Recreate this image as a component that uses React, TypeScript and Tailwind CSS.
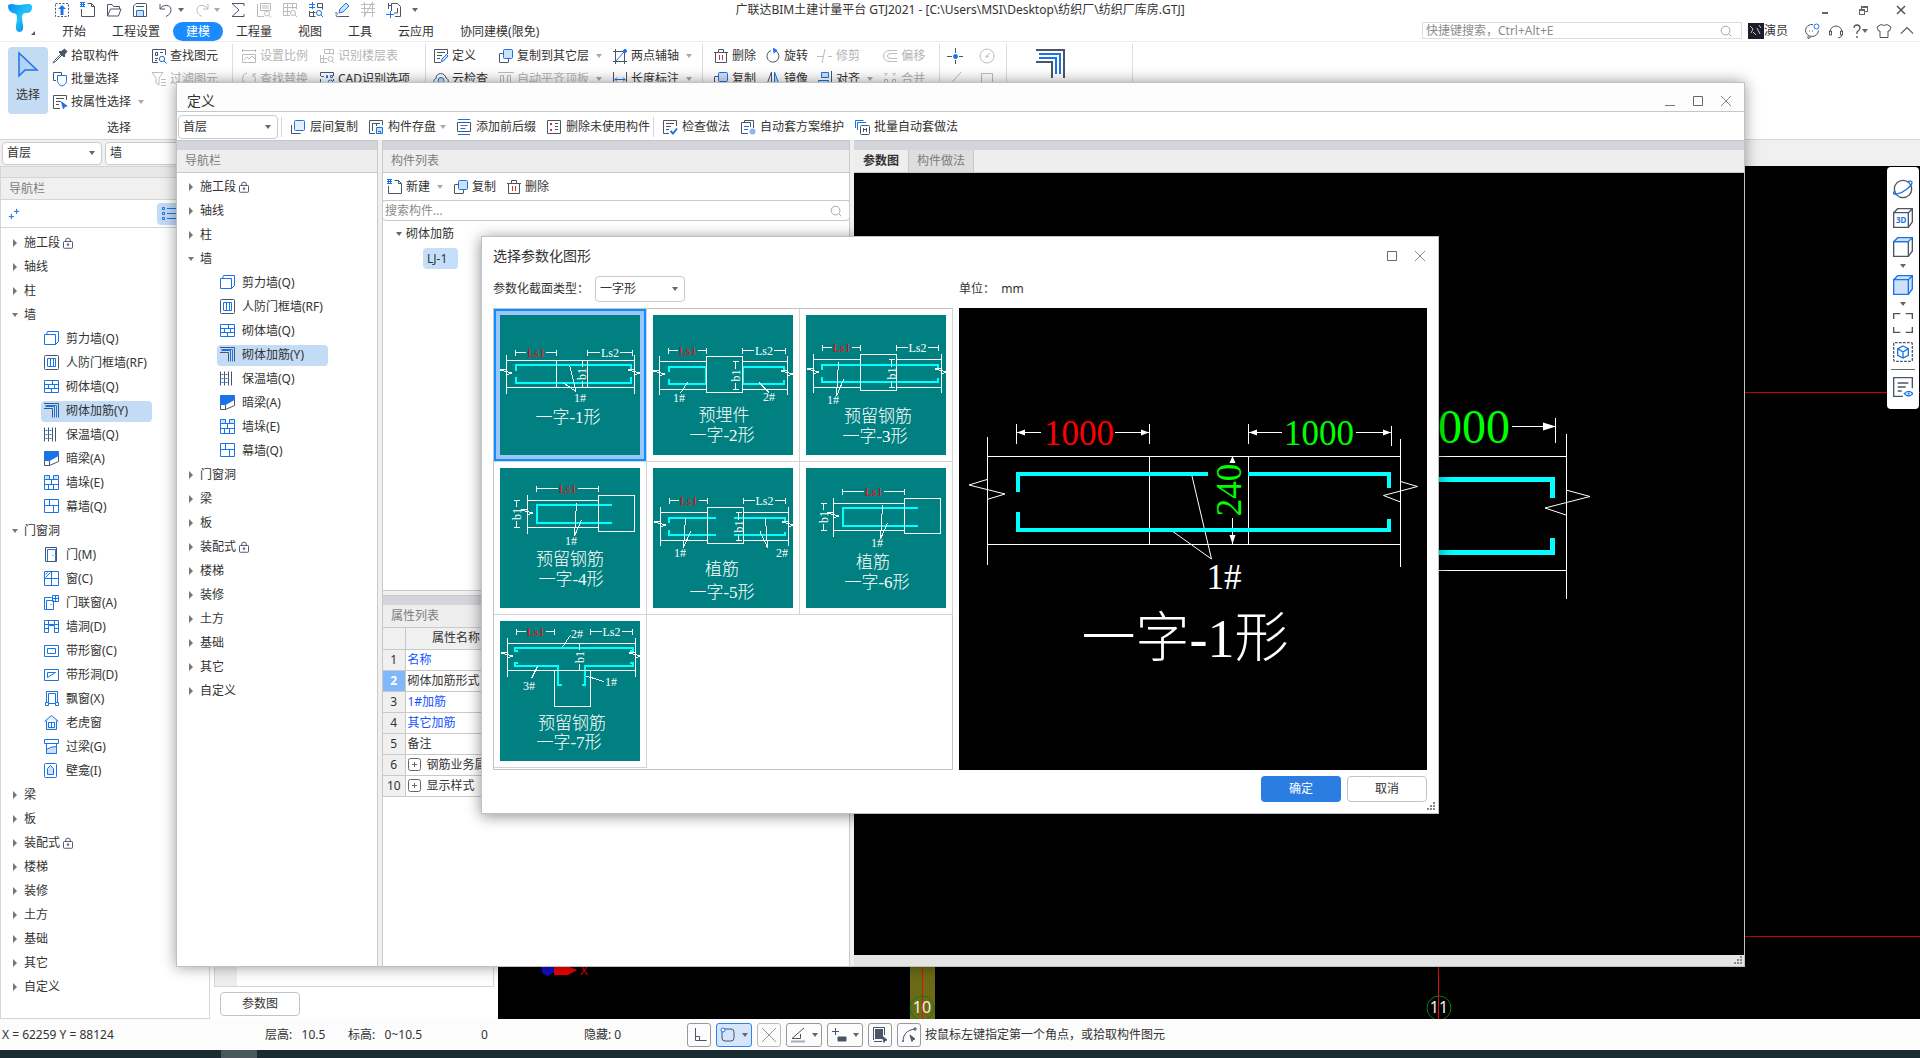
import React, { useState } from "react";

const D = "#4b5568";
const B = "#1a73e8";
const G = "#bcbcbc";
const L = "#cfe1fa";

// 16x16 line icons
const icons: Record<string, React.ReactNode> = {
  upload: (
    <>
      <rect x="1.500" y="1.500" width="13" height="13" stroke={D} strokeDasharray="2 1.5" />
      <path d="M8 3l4 4H9.500v6h-3V7H4z" fill={B} stroke="none" />
    </>
  ),
  file: (
    <>
      <path d="M7.500 1.500h4l3 3v10h-13V7" stroke={D} />
      <path d="M11.500 1.500V4.500h3" stroke={D} />
      <path d="M0 .5h5M0 2.500h5M0 4.500h5M1.500 0v5M3.500 0v5" stroke={B} />
    </>
  ),
  folder: <path d="M1.500 14V2.500h4.500l1.500 2h6V7M1.500 14L4.500 7H15l-2.500 7z" stroke={D} />,
  save: (
    <>
      <path d="M1.500 4l2.500-2.500h9.500q1 0 1 1v12h-13z" stroke={D} />
      <path d="M4 4.500h8" stroke={D} />
      <path d="M4.500 14V8.500h7V14" stroke={B} fill={L} />
    </>
  ),
  undo: <path d="M2 2v5h5M2 7c3-5 11-5 11 1 0 3-2 5-5 6.500" stroke={D} />,
  redo: <path d="M14 2v5H9M14 7C11 2 3 2 3 8c0 3 2 5 5 6.500" stroke={G} />,
  sum: <path d="M14 4V1.500H2L9 8l-7 6.500h12V12" stroke={D} />,
  gridFind: (
    <>
      <path d="M4.500 1.500h10v7h-10zM6 4h7M6 6h7M1.500 2v12.500H8" stroke={G} />
      <circle cx="11" cy="11.500" r="2.500" stroke={G} />
      <path d="M13 13.500l2 2" stroke={G} />
    </>
  ),
  tableFind: (
    <>
      <path d="M14.500 7V1.500h-13v12H8M1.500 5.500h13M1.500 9.500H8M5.500 1.500v12M10.500 1.500V7" stroke={G} />
      <circle cx="11" cy="11" r="2.500" stroke={G} />
      <path d="M13 13l2 2" stroke={G} />
    </>
  ),
  partFind: (
    <>
      <path d="M9.500 1.500h5v6M9.500 1.500V5.500h5M1.500 9v5.500h6M1.500 10.500h6M5.500 9v5.500" stroke={D} />
      <path d="M4.500 0v7M1 2.500h6M1 5.500h6" stroke={B} />
      <circle cx="11" cy="11" r="2.500" stroke={B} />
      <path d="M13 13l2 2" stroke={B} />
    </>
  ),
  pen: (
    <>
      <path d="M5 11l1-4 6-6 3 3-6 6z" stroke={B} fill={L} />
      <path d="M1 11.500c2-2 3 0 1.500 1.500S3 15 6 14.500h9" stroke={D} />
    </>
  ),
  beam: <path d="M1 2.500h14M1 6.500h14M1 10.500h14M4.500 0v15M12.500 0v15M4 15L12 1" stroke={G} />,
  pageAdd: (
    <>
      <path d="M5.500 9V1.500h6l3 3v10H9M2 3.500h3M2.500 1v6" stroke={D} />
      <path d="M4.500 9v7M0 12.500h8" stroke={B} />
      <path d="M11.500 6v5H8" stroke={D} />
    </>
  ),
  pick: (
    <>
      <path d="M9 6L2.500 12.500 1 15l2.500-1.500L10 7" stroke={D} />
      <path d="M7 4l5 5 1-1-1-1 3-3.500L12.500 1 9 4 8 3z" fill={D} stroke={D} />
    </>
  ),
  batch: (
    <>
      <path d="M4 9.500H1.500v-8h8V4" stroke={D} />
      <path d="M5.500 4.500h9v5q0 4-4.500 5.500Q5.500 13.500 5.500 9.500z" stroke={B} />
    </>
  ),
  propPick: (
    <>
      <path d="M14.500 6V1.500h-13v13H8M4 4.500h8M4 7.500h5M4 10.500h3" stroke={D} />
      <path d="M9.500 8l5.500 4-2.500.5L11.500 15z" fill={B} stroke={B} />
    </>
  ),
  findElem: (
    <>
      <path d="M14.500 7V1.500h-13v13H7M4.500 4.500h2v3h-2zM9 4.500h3M4 10.500h3M4 12.500h2" stroke={D} />
      <circle cx="11" cy="11" r="2.700" stroke={B} />
      <path d="M13 13l2.500 2.500" stroke={B} />
    </>
  ),
  filter: <path d="M1 1.500h11L8 7v7l-3-2V7zM10 8.500h5M10 11.500h5M10 14.500h5" stroke={G} />,
  scale: <path d="M1.500 1v3M14.500 1v3M1 2.500h14M1.500 6.500v8h13v-8zM3 12l3-3 2 2 3-3 3 3" stroke={G} />,
  recog: (
    <>
      <path d="M5.500 1.500h9V7M5.500 1.500V5.500h9M10.500 1.500v4M1.500 7v7.500H8M1.500 10.500H8M4.500 7v7.500" stroke={G} />
      <circle cx="11.500" cy="11" r="2.500" stroke={G} />
      <path d="M13 13l2 2" stroke={G} />
    </>
  ),
  replace: <path d="M6 2C1 3 0 10 4 13M4 13H1M4 13v-3M10 14c5-1 6-8 2-11M12 3h3M12 3v3" stroke={G} />,
  cad: (
    <>
      <path d="M1.500 8v6.500h7M1.500 5V1.500h13V5M14.500 8v2" stroke={D} />
      <path d="M2 5.500h3M7.500 7V4.500h1v2.500M11.500 4.500v2h2v-2z" stroke={B} />
      <circle cx="11.500" cy="11.500" r="2.500" stroke={B} />
    </>
  ),
  define: (
    <>
      <path d="M14.500 6V1.500h-13v13H8M4 4.500h8M4 7.500h5M4 10.500h3" stroke={D} />
      <path d="M8.500 13.500l.5-2.500 4.500-4.500 1.500 1.500-4.500 5z" stroke={B} fill={L} />
    </>
  ),
  copy: (
    <>
      <path d="M5 5.500H2q-.5 0-.5.5v8q0 .5.5.5h8q.5 0 .5-.5v-3" stroke={D} />
      <rect x="5.500" y="1.500" width="9" height="9" rx="1" stroke={B} fill={L} />
    </>
  ),
  cloudCheck: (
    <>
      <path d="M4 13.500C0 13 0 8 3 7.500 3 1 12 1 13 7c3 1 3 5 0 6.500" stroke={D} />
      <circle cx="8" cy="9.500" r="3" stroke={B} fill={L} />
    </>
  ),
  flatTop: <path d="M0 1.500h16M2.500 4.500h3v10h-3zM9.500 4.500h3v7h-3zM14.500 12v3" stroke={G} />,
  twoPoint: (
    <>
      <path d="M1 3.500h14M1 13.500h14M3.500 1v15M12.500 1v15" stroke={D} />
      <path d="M4 13l8-9" stroke={B} />
      <circle cx="13" cy="3" r="1.500" fill={B} stroke={B} />
    </>
  ),
  length: (
    <>
      <path d="M1.500 1v14M14.500 1v14" stroke={D} />
      <path d="M3 8.500h10M5 6.500l-2 2 2 2M11 6.500l2 2-2 2" stroke={B} />
    </>
  ),
  trash: (
    <>
      <path d="M1 4.500h14M2.500 4v10.500h11V4M5.500 4V1.500h5V4" stroke={D} />
      <path d="M6.500 7v5M9.500 7v5" stroke="#d93025" />
    </>
  ),
  rotate: (
    <>
      <path d="M6 2.500a6 6 0 1 0 5 .5" stroke={D} />
      <path d="M8 0l4 2.500L8.500 5" fill={B} stroke={B} />
    </>
  ),
  trim: <path d="M0 8.500h6M11 8.500h4M8 1L5 15" stroke={G} />,
  offset: <path d="M15 2.500H7a5.500 5.500 0 0 0 0 11h8M15 5.500H8a2.500 2.500 0 0 0 0 5h7" stroke={G} />,
  mirror: (
    <>
      <path d="M6.500 1L1.500 14.500h5z" stroke={D} />
      <path d="M9.500 1l5 13.500h-5z" fill={L} stroke={B} />
    </>
  ),
  align: (
    <>
      <path d="M14.500 0v16" stroke={D} />
      <path d="M4.500 1.500h7v5h-7zM1.500 9.500h10v4h-10z" stroke={B} fill={L} />
    </>
  ),
  merge: <path d="M2.500 8.500h3v6h-3zM10.500 8.500h3v6h-3zM3 5l3-3M13 5l-3-3M2 2.500h2M12 2.500h2" stroke={G} />,
  point: (
    <>
      <path d="M8.500 0v5M8.500 12v4M0 8.500h5M12 8.500h4" stroke={D} />
      <circle cx="8.500" cy="8.500" r="2" fill={B} stroke={B} />
    </>
  ),
  circle: (
    <>
      <circle cx="8" cy="8" r="7" stroke={G} />
      <path d="M8 8l3-3M7 8h2v1H7z" stroke={G} />
    </>
  ),
  line: <path d="M2 15L14 1" stroke={G} />,
  rect: <path d="M2.500 2.500h11v11h-11z" stroke={G} />,
  layers: (
    <>
      <path d="M1.500 6v8.500h9" stroke={D} />
      <rect x="4.500" y="1.500" width="10" height="10" rx="1" stroke={B} fill="#e6f0fd" />
    </>
  ),
  store: (
    <>
      <path d="M14.500 6V1.500h-13v13H7M4 4.500h8M4.500 4.500V12M8.500 4.500V7" stroke={D} />
      <path d="M8.500 8.500h6v6h-6zM10 12.500h2.500v2" stroke={B} fill={L} />
    </>
  ),
  affix: (
    <>
      <path d="M1.500 3.500h13v9h-13z" stroke={D} />
      <path d="M2 .5h12M2 15.500h12M4.500 6.500h7M4.500 9.500h5" stroke={B} />
    </>
  ),
  unused: (
    <>
      <path d="M1.500 1.500h13v13h-13z" stroke={D} />
      <path d="M4 4l2 2M6 4L4 6M4 10l2 2M6 10l-2 2" stroke="#d93025" />
      <path d="M9 4.500h3M9 10.500h3M9 7.500h3" stroke={D} />
    </>
  ),
  check: (
    <>
      <path d="M14.500 7V1.500h-13v13H7M4 4.500h8M4 7.500h5M4 10.500h3" stroke={D} />
      <path d="M8.500 12l2.500 2.500 4-5" stroke={B} strokeWidth="2" />
    </>
  ),
  scheme: (
    <>
      <path d="M4.500 3V1.500h9V9M1.500 3.500h9V8M1.500 3.500v11H8" stroke={D} />
      <path d="M4 7.500h5M4 10.500h4" stroke={B} />
      <circle cx="12.500" cy="12.500" r="3" fill="#8bb8f3" stroke="none" />
    </>
  ),
  batchAuto: (
    <>
      <path d="M1.500 9V1.500h8M3.500 11V3.500H12" stroke={B} />
      <rect x="6.500" y="6.500" width="9" height="9" rx="1" stroke={D} />
      <path d="M9.500 9v4M12.500 9v4M9.500 10.500h3" stroke={D} />
    </>
  ),
  search: (
    <>
      <circle cx="7.500" cy="7.500" r="5" stroke="#999" />
      <path d="M11 11l3 3" stroke="#999" />
    </>
  ),
  shear: <path d="M1 4h11v10H1zM3 4l1-3h11v10l-3 3" stroke={B} />,
  civil: (
    <>
      <rect x="1" y="1" width="14" height="14" rx="1" stroke={D} />
      <path d="M4 4h8v8H4zM7 4v8M10 4v8" stroke={B} />
    </>
  ),
  brick: <path d="M1 2h14v12H1zM1 6h14M1 10h14M9 2v4M5 6v4M11 6v4M8 10v4" stroke={B} />,
  rebar: (
    <>
      <path d="M0 1h15v14M0 6h9v9" stroke={D} />
      <path d="M2 3h11v12M2 4h9v11" stroke={B} />
    </>
  ),
  insul: (
    <>
      <path d="M1 1v14M5 1v14M9 1v14M12 1v14" stroke={D} />
      <path d="M2 4h2M2 8h2M2 12h2M6 4h2M6 8h2M6 12h2" stroke={B} />
    </>
  ),
  hidden: (
    <>
      <path d="M1 1h14v4l-9 5H1z" fill={B} stroke={B} />
      <path d="M1 10v5h5l9-4V5M6 10v5" stroke={D} />
    </>
  ),
  pier: (
    <>
      <path d="M2 1h4v4H2zM10 1h4v4h-4z" fill={L} stroke="none" />
      <path d="M6 5H1V1h5v4M10 5h5V1h-5v4M1 5v10h14V5M1 5h14M1 10h14M8 5v5M5 10v5M10 10v5" stroke={B} />
    </>
  ),
  curtain: <path d="M1 1h14v13H1zM1 7h14M6 1v6M10 7v7" stroke={B} />,
  door: (
    <>
      <path d="M2 1h11v14H2z" stroke={D} />
      <path d="M4 15V3h8v12M9 9h1" stroke={B} />
    </>
  ),
  window: <path d="M1 1h14v14H1zM1 8h14M8 1v14M2 7l5-5M2 4l2-2" stroke={B} />,
  doorWin: <path d="M8 3H1v12h2M3 15V6h7v9zM9 1h6v6H9zM12 1v6M9 4h6M7 10h1" stroke={B} />,
  wallHole: <path d="M1 14V2h14v12h-4V7H5v7zM1 6h14M5 2v4M11 2v4M1 10h4M11 10h4" stroke={B} />,
  ribbonWin: <path d="M1 3h14v11H1zM4 6h8v5H4z" stroke={B} />,
  ribbonHole: <path d="M1 3h14v11H1zM4 6h8l-8 5z" stroke={B} />,
  bay: <path d="M3 12V1h11v11M5 12V3h7v9M2 12h3v3H2zM12 12h3v3h-3zM5 13h7" stroke={B} />,
  dormer: <path d="M1 7l7-6 7 6M3 6v9h10V6M5 8h6v5H5zM8 8v5" stroke={B} fill="#e6f0fd" />,
  lintel: (
    <>
      <path d="M1 1h14v4H1zM3 5v10h10V5" stroke={B} />
      <path d="M3 15v-4q4-3 10-3v7z" fill={L} stroke={B} />
    </>
  ),
  niche: (
    <>
      <rect x="1" y="1" width="12" height="14" rx="1" stroke={B} />
      <path d="M4 12V6l3-3 3 3v6z" stroke={B} fill={L} />
    </>
  ),
  lock: (
    <>
      <rect x="2" y="6" width="12" height="9" rx="1" stroke={D} strokeWidth="1.300" />
      <path d="M5 6V4q0-2.500 3-2.500T11 4v2M8 9v3" stroke={D} strokeWidth="1.300" />
      <circle cx="8" cy="10" r="1.200" stroke={D} />
    </>
  ),
  orbit: (
    <>
      <circle cx="8" cy="8" r="6.500" stroke={D} />
      <path d="M2 9c-4 5 4 3 9-1s5-7 0-5.500" stroke={B} />
    </>
  ),
  cube: <path d="M1 4h11v11H1zM1 4l3-3h11v10l-3 4M12 4l3-3" stroke={D} />,
  cubeTop: (
    <>
      <path d="M1 4h11v11H1zM15 1v10l-3 4" stroke={D} />
      <path d="M1 4l3-3h11l-3 3z" stroke={B} fill={L} />
    </>
  ),
  cubeBlue: <path d="M1 4h11v11H1zM1 4l3-3h11v10l-3 4M12 4l3-3" stroke={B} fill={L} />,
  fit: <path d="M1 5V1h5M10 1h5v4M15 11v4h-5M6 15H1v-4" stroke={D} />,
  isolate: (
    <>
      <rect x="1" y="1" width="14" height="14" rx="1" stroke={D} strokeDasharray="2 1" />
      <path d="M8 3.500l4 2v5l-4 2-4-2v-5zM4 5.500l4 2.500 4-2.500M8 8v4" stroke={B} />
    </>
  ),
  listView: (
    <>
      <path d="M15 9V1H1v14h7M4 5h8M4 8h6M4 11h3" stroke={D} />
      <path d="M9 13q3-3.500 6.500 0-3.500 3.500-6.500 0z" stroke={B} />
      <circle cx="12.200" cy="13" r="0.800" fill={B} />
    </>
  ),
  plus2: <path d="M11.500 1v7M8 4.500h7M4.500 8v7M1 11.500h7" stroke={B} strokeWidth="1.300" />,
  bullets: <path d="M1.500 1.500h2v2h-2zM1.500 6.500h2v2h-2zM1.500 11.500h2v2h-2zM6 2.500h10M6 7.500h10M6 12.500h10" stroke={B} />,
  chat: (
    <>
      <path d="M9 1.500a6.500 6 0 1 0 5.500 6M4 13v2.500l3-1.500M5 8h1M8 8h1" stroke={D} />
      <circle cx="12.500" cy="3.500" r="2.500" stroke={B} />
    </>
  ),
  headset: <path d="M2 9a6 6 0 1 1 12 0M1.500 8v4h2V8zM12.500 8v4h2V8zM14 12q-1 3-4 3" stroke={D} />,
  help: <path d="M5 5q0-3 3-3t3 3q0 2-3 4v2M8 13v2" stroke={D} strokeWidth="1.300" />,
  shirt: <path d="M5 1.500L1 4l1.500 4H4v6.500h8V8h1.500L15 4l-4-2.500q-3 2-6 0z" stroke={D} />,
  up: <path d="M1 11l7-7 7 7" stroke={D} strokeWidth="1.300" />,
};

type IconProps = { name: string; className?: string; viewBox?: string };

const Icon: React.FC<IconProps> = ({ name, className = "size-4", viewBox = "0 0 16 16" }) => (
  <svg viewBox={viewBox} fill="none" strokeWidth="1" className={`${className} shrink-0`} aria-hidden="true">
    {icons[name]}
  </svg>
);

const Caret: React.FC<{ grey?: boolean }> = ({ grey }) => (
  <svg viewBox="0 0 6 4" className="h-1 w-1.5 shrink-0" aria-hidden="true">
    <path d="M0 0h6L3 4z" fill={grey ? "#aaa" : "#666"} />
  </svg>
);

type SelectProps = { label: string; options: string[]; className: string };

const Select: React.FC<SelectProps> = ({ label, options, className }) => (
  <div className={`relative flex items-center rounded border border-[#c9cbcf] bg-white ${className}`}>
    <select aria-label={label} className="h-full w-full appearance-none bg-transparent pl-1 outline-none">
      {options.map((o) => (
        <option key={o}>{o}</option>
      ))}
    </select>
    <span className="pointer-events-none absolute right-1.5">
      <Caret />
    </span>
  </div>
);

type TreeItem = { name: string; icon: string };
type TreeGroup = { name: string; locked?: boolean; items?: TreeItem[] };

const groups: TreeGroup[] = [
  { name: "施工段", locked: true },
  { name: "轴线" },
  { name: "柱" },
  {
    name: "墙",
    items: [
      { name: "剪力墙(Q)", icon: "shear" },
      { name: "人防门框墙(RF)", icon: "civil" },
      { name: "砌体墙(Q)", icon: "brick" },
      { name: "砌体加筋(Y)", icon: "rebar" },
      { name: "保温墙(Q)", icon: "insul" },
      { name: "暗梁(A)", icon: "hidden" },
      { name: "墙垛(E)", icon: "pier" },
      { name: "幕墙(Q)", icon: "curtain" },
    ],
  },
  {
    name: "门窗洞",
    items: [
      { name: "门(M)", icon: "door" },
      { name: "窗(C)", icon: "window" },
      { name: "门联窗(A)", icon: "doorWin" },
      { name: "墙洞(D)", icon: "wallHole" },
      { name: "带形窗(C)", icon: "ribbonWin" },
      { name: "带形洞(D)", icon: "ribbonHole" },
      { name: "飘窗(X)", icon: "bay" },
      { name: "老虎窗", icon: "dormer" },
      { name: "过梁(G)", icon: "lintel" },
      { name: "壁龛(I)", icon: "niche" },
    ],
  },
  { name: "梁" },
  { name: "板" },
  { name: "装配式", locked: true },
  { name: "楼梯" },
  { name: "装修" },
  { name: "土方" },
  { name: "基础" },
  { name: "其它" },
  { name: "自定义" },
];

const NavTree: React.FC<{ initial: string[] }> = ({ initial }) => {
  const [open, setOpen] = useState(initial);
  const [selected, setSelected] = useState("砌体加筋(Y)");

  const toggle = (name: string) => {
    setOpen(open.includes(name) ? open.filter((n) => n !== name) : [...open, name]);
  };

  return (
    <ul>
      {groups.map((g) => {
        const expanded = open.includes(g.name);
        return (
          <li key={g.name}>
            <button className="flex h-6 items-center pl-[11px]" onClick={() => toggle(g.name)}>
              <svg viewBox="0 0 6 8" className="mr-1.5 h-2 w-1.5">
                <path d={expanded ? "M0 2h6L3 6z" : "M1 0l4 4-4 4z"} fill="#777" />
              </svg>
              {g.name}
              {g.locked && <Icon name="lock" className="ml-0.5 size-3" />}
            </button>
            {expanded &&
              g.items?.map((it) => (
                <div key={it.name} className="flex h-6 items-center pl-10">
                  <button
                    onClick={() => setSelected(it.name)}
                    className={`flex h-[21px] w-[111px] items-center gap-1.5 rounded-sm pl-[3px] whitespace-nowrap ${
                      selected === it.name ? "bg-[#c3dbf5]" : ""
                    }`}
                  >
                    <Icon name={it.icon} viewBox="0.5 0.5 16 16" />
                    {it.name}
                  </button>
                </div>
              ))}
          </li>
        );
      })}
    </ul>
  );
};

const quick = ["sum", "gridFind", "tableFind", "partFind", "pen", "beam", "pageAdd"];
const menu = ["开始", "工程设置", "建模", "工程量", "视图", "工具", "云应用", "协同建模(限免)"];

const TopBar: React.FC = () => (
  <header className="relative shrink-0 border-b border-[#ececec] bg-white">
    <div className="flex h-5 items-center">
      <div className="flex flex-1 items-center gap-2.5 pl-[54px]">
        {["upload", "file", "folder", "save"].map((n) => (
          <button key={n} aria-label={n}>
            <Icon name={n} />
          </button>
        ))}
        <button aria-label="撤销" className="flex items-center gap-1">
          <Icon name="undo" />
          <Caret />
        </button>
        <button aria-label="恢复" className="flex items-center gap-1">
          <Icon name="redo" />
          <Caret grey />
        </button>
        {quick.map((n) => (
          <button key={n} aria-label={n}>
            <Icon name={n} />
          </button>
        ))}
        <Caret />
      </div>
      <h1>广联达BIM土建计量平台 GTJ2021 - [C:\Users\MSI\Desktop\纺织厂\纺织厂库房.GTJ]</h1>
      <div className="flex flex-1 items-center justify-end gap-7 pr-3.5 pl-10">
        <button aria-label="最小化">
          <svg viewBox="0 0 10 10" className="size-2.5">
            <path d="M2 8h6" stroke="#666" strokeWidth="2" />
          </svg>
        </button>
        <button aria-label="还原">
          <svg viewBox="0 0 10 10" className="size-2.5" fill="none" stroke="#666" shapeRendering="crispEdges">
            <path d="M1 4h5v5H1zM1 5h5M3 4V1h6v5H6M3 2h6" />
          </svg>
        </button>
        <button aria-label="关闭">
          <svg viewBox="0 0 10 10" className="size-2.5">
            <path d="M1 1l8 8M9 1L1 9" stroke="#555" strokeWidth="1.5" />
          </svg>
        </button>
      </div>
    </div>
    <div className="flex h-[21px] items-end pr-1.5">
      <nav className="flex flex-1 items-center pl-[49px]">
        {menu.map((m) => (
          <button
            key={m}
            className={`h-[19px] px-[13px] ${m === "建模" ? "rounded-full bg-[#1a8cff] text-white" : ""}`}
          >
            {m}
          </button>
        ))}
      </nav>
      <label className="mr-1.5 mb-0.5 flex h-[17px] w-[320px] items-center border border-[#ddd] pr-2 pl-[3px]">
        <input aria-label="快捷键搜索" placeholder="快捷键搜索，Ctrl+Alt+E" className="flex-1 outline-none placeholder:text-[#8c8c8c]" />
        <Icon name="search" className="size-3.5" />
      </label>
      <span className="mb-0.5 flex items-center pr-4">
        <svg viewBox="0 0 16 16" className="size-4">
          <path d="M0 0h16v16H0z" fill="#1c1c2e" />
          <path d="M2 3l3 3-2 4M9 5l3 6M11 2l2 3M5 9l3 3" stroke="#d8c3ad" fill="none" />
        </svg>
        演员
      </span>
      <div className="mb-0.5 flex items-center gap-2">
        <Icon name="chat" />
        <Icon name="headset" />
        <span className="flex items-center">
          <Icon name="help" className="-mx-[3px] size-4" />
          <Caret />
        </span>
        <Icon name="shirt" />
        <Icon name="up" className="size-3.5" />
      </div>
    </div>
    {/* app logo spans both rows */}
    <svg viewBox="0 0 36 34" className="absolute top-1 left-2 h-[34px] w-9">
      <defs>
        <linearGradient id="logo" x1="0" y1="0" x2="1" y2="1">
          <stop offset="0" stopColor="#0a8bf0" />
          <stop offset="0.5" stopColor="#1fc3f7" />
          <stop offset="1" stopColor="#0b6fe0" />
        </linearGradient>
      </defs>
      <path
        d="M0 2q0-2 4-2 4 1 8 1 5-1 9-1 3 0 3 3 0 6-6 6-4 0-4 4 0 4 1 8 1 7-3.500 7T8 21q1-4 1-8 0-3-2-3.500-7-1-7-7.500z"
        fill="url(#logo)"
      />
      <path d="M27 27v4h-4z" fill="#555" />
    </svg>
  </header>
);

type Cmd = { icon: string; text?: string; off?: boolean; drop?: boolean };

const Command: React.FC<Cmd> = ({ icon, text, off, drop }) => (
  <button
    aria-label={text || icon}
    className={`flex h-[23px] items-center gap-[3px] whitespace-nowrap ${off ? "text-[#b5b5b5]" : ""}`}
  >
    <Icon name={icon} />
    {text}
    {drop && (
      <span className="ml-1">
        <Caret grey />
      </span>
    )}
  </button>
);

type RibbonGroup = { className: string; cols: Cmd[][] };

const ribbon: RibbonGroup[] = [
  {
    className: "gap-[11px] pl-2 pr-[15px]",
    cols: [
      [
        { icon: "scale", text: "设置比例", off: true },
        { icon: "replace", text: "查找替换", off: true },
      ],
      [
        { icon: "recog", text: "识别楼层表", off: true },
        { icon: "cad", text: "CAD识别选项" },
      ],
    ],
  },
  {
    className: "gap-2.5 pl-[7px] pr-2.5",
    cols: [
      [
        { icon: "define", text: "定义" },
        { icon: "cloudCheck", text: "云检查" },
      ],
      [
        { icon: "copy", text: "复制到其它层", drop: true },
        { icon: "flatTop", text: "自动平齐顶板", off: true, drop: true },
      ],
      [
        { icon: "twoPoint", text: "两点辅轴", drop: true },
        { icon: "length", text: "长度标注", drop: true },
      ],
    ],
  },
  {
    className: "gap-[9px] pl-2.5 pr-3.5",
    cols: [
      [
        { icon: "trash", text: "删除" },
        { icon: "copy", text: "复制" },
      ],
      [
        { icon: "rotate", text: "旋转" },
        { icon: "mirror", text: "镜像" },
      ],
      [
        { icon: "trim", text: "修剪", off: true },
        { icon: "align", text: "对齐", drop: true },
      ],
      [
        { icon: "offset", text: "偏移", off: true },
        { icon: "merge", text: "合并", off: true },
      ],
    ],
  },
  {
    className: "gap-4 pl-[7px] pr-[11px]",
    cols: [
      [{ icon: "point" }, { icon: "line" }],
      [{ icon: "circle" }, { icon: "rect" }],
    ],
  },
];

const Ribbon: React.FC = () => (
  <section className="flex h-[97px] shrink-0 items-start bg-white pt-0.5">
    <div className="w-[232px]">
      <div className="flex pl-2">
        <button className="mt-[3px] flex h-[67px] w-10 flex-col items-center gap-2 rounded-sm bg-[#c3dbf3] pt-1">
          <svg viewBox="0 0 24 28" className="h-7 w-6">
            <path d="M3 2v23l6-6h12z" fill="#b4d1f7" stroke={B} strokeWidth="1.5" />
          </svg>
          选择
        </button>
        <div className="ml-1">
          <Command icon="pick" text="拾取构件" />
          <Command icon="batch" text="批量选择" />
          <Command icon="propPick" text="按属性选择" drop />
        </div>
        <div className="ml-[7px]">
          <Command icon="findElem" text="查找图元" />
          <Command icon="filter" text="过滤图元" off />
        </div>
      </div>
      <p className="pt-1.5 pl-1.5 text-center">选择</p>
    </div>
    {ribbon.map((g, i) => (
      <div key={i} className={`flex h-[90px] border-l border-[#ddd] ${g.className}`}>
        {g.cols.map((col, j) => (
          <div key={j}>
            {col.map((c) => (
              <Command key={c.icon} {...c} />
            ))}
          </div>
        ))}
      </div>
    ))}
    <div className="h-[90px] w-[127px] border-x border-[#ddd] pt-1 pl-7">
      <svg viewBox="0 0 32 32" className="size-8" fill="none">
        <path d="M1 2h28v28M1 14h16v16" stroke={D} strokeWidth="2" />
        <path d="M4 6h21v20M4 10h17v16" stroke={B} strokeWidth="2" />
      </svg>
    </div>
  </section>
);

const PanelTitle: React.FC<{ children: React.ReactNode }> = ({ children }) => (
  <>
    <div className="h-2.5 shrink-0 border-t border-[#c3c6cb] bg-[#d3d5da]" />
    <div className="flex h-[23px] shrink-0 items-end border-b border-[#c9c9c9] bg-[#eee] text-[#7d7d7d]">{children}</div>
  </>
);

// main drawing area behind the windows
const Workspace: React.FC = () => (
  <main className="relative min-w-0 flex-1 bg-black">
    <svg className="block h-full w-full">
      <path d="M1240 226.500H1422M1240 770.500H1422" stroke="#d00000" />
      <rect x="412" y="780" width="25" height="80" fill="#6b6b16" />
      <path d="M424.500 780v80M940.500 780v80" stroke="#e01010" />
      <g fill="none" stroke="#0f7a12">
        <circle cx="424" cy="842" r="12" />
        <circle cx="941" cy="842" r="12" />
      </g>
      <g fill="#f2f2e6" fontSize="16" textAnchor="middle" className="font-['Noto_Sans']">
        <text x="424" y="847">10</text>
        <text x="941" y="847">11</text>
      </g>
      <path d="M43 801h13v5l-6 4-5-2z" fill="#1010c8" />
      <path d="M56 800h14l9 4-9 5H56z" fill="#f00000" />
      <text x="82" y="809" fontSize="12" fill="#e00000" className="font-['Liberation_Sans']">
        X
      </text>
    </svg>
    <aside className="absolute top-px right-px flex w-8 flex-col items-center gap-[9px] rounded-sm bg-white pt-3 pb-3">
      <Icon name="orbit" className="size-5" viewBox="0.5 0.5 15 15" />
      <span className="relative">
        <Icon name="cube" className="size-5" viewBox="0.5 0.5 15 15" />
        <b className="absolute bottom-1 left-[3px] text-[8px] leading-none text-[#1a73e8]">3D</b>
      </span>
      <Icon name="cubeTop" className="size-5" viewBox="0.5 0.5 15 15" />
      <span className="-my-0.5 flex">
        <Caret />
      </span>
      <Icon name="cubeBlue" className="size-5" viewBox="0.5 0.5 15 15" />
      <span className="-my-0.5 flex">
        <Caret />
      </span>
      <Icon name="fit" className="size-5" viewBox="0.5 0.5 15 15" />
      <Icon name="isolate" className="size-5" viewBox="0.5 0.5 15 15" />
      <span className="-my-0.5 h-px w-6 bg-[#666]" />
      <Icon name="listView" className="size-5" viewBox="0.5 0.5 15 15" />
    </aside>
  </main>
);

const StatusBar: React.FC = () => (
  <footer className="flex h-[31px] shrink-0 items-center bg-[#fcfcfc] pl-0.5 whitespace-nowrap">
    <span className="w-[263px]">X = 62259 Y = 88124</span>
    <span className="w-[83px]">层高:&nbsp;&nbsp; 10.5</span>
    <span className="w-[133px]">标高:&nbsp;&nbsp; 0~10.5</span>
    <span className="w-[103px]">0</span>
    <span className="w-[103px]">隐藏: 0</span>
    <div className="flex gap-[5px]">
      <button aria-label="正交" className="flex h-6 w-6 items-center justify-center rounded-[3px] border border-[#999]">
        <svg viewBox="0 0 16 16" className="size-4" fill="none" stroke={D}>
          <path d="M4.500 1v12.500h11M4 9.500h4.500v4" />
        </svg>
      </button>
      <button aria-label="捕捉" className="flex h-6 w-9 items-center justify-center gap-1.5 rounded-[3px] border border-[#2f80ed] bg-[#d5e5fb]">
        <svg viewBox="0 0 16 16" className="size-4" fill="none" stroke={D}>
          <rect x="2" y="2" width="12" height="12" rx="3" />
          <circle cx="3" cy="3" r="2" stroke={B} fill="#fff" />
        </svg>
        <Caret />
      </button>
      <button aria-label="交点" className="flex h-6 w-6 items-center justify-center rounded-[3px] border border-[#bbb]">
        <svg viewBox="0 0 16 16" className="size-4" stroke="#999">
          <path d="M1 1l14 14M15 1L1 15" />
        </svg>
      </button>
      <button aria-label="角度" className="flex h-6 w-9 items-center justify-center gap-1.5 rounded-[3px] border border-[#999]">
        <svg viewBox="0 0 16 16" className="size-4" fill="none" stroke={D}>
          <path d="M14 1L2 11.500h8.500V7" />
          <path d="M1 14.500h14" stroke="#a8adb8" strokeWidth="2" />
        </svg>
        <Caret />
      </button>
      <button aria-label="输入" className="flex h-6 w-9 items-center justify-center gap-1.5 rounded-[3px] border border-[#999]">
        <svg viewBox="0 0 16 16" className="size-4" fill={D} stroke={D}>
          <path d="M4.500 1v7M1 4.500h7M7 10h8v4H7z" />
        </svg>
        <Caret />
      </button>
      <button aria-label="图层" className="flex h-6 w-6 items-center justify-center rounded-[3px] border border-[#999]">
        <svg viewBox="0 0 16 16" className="size-4" fill="none" stroke={D}>
          <rect x="3.500" y="2.500" width="7" height="9" fill={D} />
          <path d="M1.500 13V.5h11V8M2 14.500h8" />
          <path d="M10 9l5 4-2 .5-1 2z" fill={D} />
        </svg>
      </button>
      <button aria-label="弧线" className="flex h-6 w-6 items-center justify-center rounded-[3px] border border-[#999]">
        <svg viewBox="0 0 16 16" className="size-4" fill="none" stroke={D}>
          <path d="M2 15C2 7 6 3 14 2M1 14h2M13 1h2v2h-2z" />
          <path d="M9 8l5 4-2 .5-1 2z" fill={D} />
        </svg>
      </button>
    </div>
    <span className="ml-1">按鼠标左键指定第一个角点，或拾取构件图元</span>
  </footer>
);

const WinButtons: React.FC<{ min?: boolean }> = ({ min }) => (
  <div className="flex items-center gap-4">
    {min && (
      <button aria-label="最小化">
        <svg viewBox="0 0 12 12" className="size-3">
          <path d="M1 10.500h10" stroke="#777" />
        </svg>
      </button>
    )}
    <button aria-label="最大化">
      <svg viewBox="0 0 12 12" className="size-3">
        <path d="M1.500 1.500h9v9h-9z" fill="none" stroke="#666" />
      </svg>
    </button>
    <button aria-label="关闭">
      <svg viewBox="0 0 12 12" className="size-3">
        <path d="M1 1l10 10M11 1L1 11" stroke="#888" />
      </svg>
    </button>
  </div>
);

const Grip: React.FC = () => (
  <svg viewBox="0 0 8 8" className="size-2">
    <path d="M6 0h2v2H6zM3 3h2v2H3zM6 3h2v2H6zM0 6h2v2H0zM3 6h2v2H3zM6 6h2v2H6z" fill="#888" />
  </svg>
);

const defTools: (Cmd & { sep?: boolean })[] = [
  { icon: "layers", text: "层间复制", sep: true },
  { icon: "store", text: "构件存盘", drop: true },
  { icon: "affix", text: "添加前后缀" },
  { icon: "unused", text: "删除未使用构件" },
  { icon: "check", text: "检查做法", sep: true },
  { icon: "scheme", text: "自动套方案维护" },
  { icon: "batchAuto", text: "批量自动套做法" },
];

type Prop = { no: string; name: string; blue?: boolean; group?: boolean };

const props: Prop[] = [
  { no: "1", name: "名称", blue: true },
  { no: "2", name: "砌体加筋形式" },
  { no: "3", name: "1#加筋", blue: true },
  { no: "4", name: "其它加筋", blue: true },
  { no: "5", name: "备注" },
  { no: "6", name: "钢筋业务属性", group: true },
  { no: "10", name: "显示样式", group: true },
];

const DefineWindow: React.FC = () => (
  <div className="absolute top-[82px] right-[175px] bottom-[91px] left-44 flex flex-col border border-[#bfc1c4] bg-[#f0f0f0] shadow-[0_0_14px_rgba(0,0,0,0.4)]">
    <div className="flex h-[29px] shrink-0 items-center justify-between border-b border-[#c3c6cb] bg-[#fdfdfd] pt-2 pr-3 pl-2.5 text-sm">
      定义
      <WinButtons min />
    </div>
    <div className="flex h-7 shrink-0 items-center bg-white pt-px pl-px">
      <Select label="楼层" options={["首层"]} className="h-6 w-[100px]" />
      {defTools.map((t) => (
        <React.Fragment key={t.text}>
          {t.sep && <span className="ml-[3px] h-5 w-px bg-[#d8d8d8]" />}
          <button className={`flex items-center gap-1 whitespace-nowrap ${t.sep ? "ml-2" : "ml-2.5"}`}>
            <Icon name={t.icon} />
            {t.text}
            {t.drop && <Caret grey />}
          </button>
        </React.Fragment>
      ))}
    </div>
    <div className="flex min-h-0 flex-1 gap-1">
      <div className="flex w-[201px] flex-col border-r border-[#c9c9c9] bg-white">
        <PanelTitle>
          <span className="pb-[3px] pl-2">导航栏</span>
        </PanelTitle>
        <div className="pt-0.5">
          <NavTree initial={["墙"]} />
        </div>
      </div>

      <div className="flex w-[468px] flex-col border-x border-[#c9c9c9]">
        <PanelTitle>
          <span className="pb-[3px] pl-2">构件列表</span>
        </PanelTitle>
        <div className="flex h-7 items-center gap-2.5 border-b border-[#c9c9c9] bg-white pt-px pl-1">
          <Command icon="file" text="新建" drop />
          <Command icon="copy" text="复制" />
          <Command icon="trash" text="删除" />
        </div>
        <label className="flex h-5 items-center rounded-sm border-b border-[#c9c9c9] bg-white pr-1.5 pl-0.5">
          <input aria-label="搜索构件" placeholder="搜索构件..." className="flex-1 outline-none placeholder:text-[#8c8c8c]" />
          <Icon name="search" className="size-3.5" />
        </label>
        <div className="h-[370px] border-b border-[#c9c9c9] bg-white pt-px">
          <button className="flex h-6 items-center gap-1 pl-[13px]">
            <Caret />
            砌体加筋
          </button>
          <button className="mt-0.5 ml-10 h-[21px] rounded-sm bg-[#c5defa] px-1 text-left">LJ-1&nbsp;&nbsp;</button>
        </div>
        <div className="h-1" />
        <PanelTitle>
          <span className="pb-[3px] pl-2">属性列表</span>
        </PanelTitle>
        <div className="flex-1 bg-white">
          <table className="w-full table-fixed border-collapse">
            <thead>
              <tr className="h-[21px] bg-[#f0f0f0]">
                <th className="w-[22px] border-r border-b border-[#c9c9c9]" />
                <th className="w-[102px] border-r border-b border-[#c9c9c9] p-0 font-normal">属性名称</th>
                <th className="border-r border-b border-[#c9c9c9] p-0 font-normal">属性值</th>
                <th className="w-[42px] border-b border-[#c9c9c9] p-0 font-normal">附加</th>
              </tr>
            </thead>
            <tbody>
              {props.map((p) => (
                <tr key={p.no} className="h-[21px] border-b border-[#c9c9c9]">
                  <td
                    className={`border-r border-[#c9c9c9] p-0 text-center ${
                      p.no === "2" ? "bg-[#80b8fb] font-bold text-white" : "bg-[#f0f0f0]"
                    }`}
                  >
                    {p.no}
                  </td>
                  <td className={`border-r border-[#c9c9c9] p-0 pl-0.5 whitespace-nowrap ${p.blue ? "text-[#1452ff]" : ""}`}>
                    <span className="flex items-center gap-1.5">
                      {p.group && (
                        <svg viewBox="0 0 13 13" className="size-[13px]" fill="none" stroke="#666">
                          <rect x="0.500" y="0.500" width="12" height="12" rx="2" />
                          <path d="M6.500 4v5M4 6.500h5" />
                        </svg>
                      )}
                      {p.name}
                    </span>
                  </td>
                  <td className="border-r border-[#c9c9c9]" />
                  <td />
                </tr>
              ))}
            </tbody>
          </table>
        </div>
      </div>

      <div className="flex min-w-0 flex-1 flex-col">
        <PanelTitle>
          <button className="h-full border-r border-[#c9c9c9] px-[9px] font-bold text-[#333]">参数图</button>
          <button className="h-full border-r border-[#c9c9c9] bg-[#dedede] px-2">构件做法</button>
        </PanelTitle>
        <svg className="block min-h-0 w-full flex-1 bg-black">
          <g stroke="#fff" fill="none" shapeRendering="crispEdges">
            <path d="M300 283.500H712M300 397.500H712M712.500 261v165M701.500 245v25M658 253.500h43" />
          </g>
          <path d="M712 317l24 6.500-45 11.500 21 7" stroke="#fff" fill="none" />
          <path d="M702 253.500l-13-4v8z" fill="#fff" />
          <path d="M300 306.500H698.500V325M698.500 365v14.500H300" stroke="#0ff" strokeWidth="5" fill="none" />
          <text x="656" y="270" fontSize="48" fill="#0f0" textAnchor="end" className="font-['Liberation_Serif']">
            1000
          </text>
        </svg>
        <div className="flex h-[11px] shrink-0 items-end justify-end bg-[#e4e4e4] p-0.5">
          <Grip />
        </div>
      </div>
    </div>
  </div>
);

type DimProps = { x1: number; x2: number; y: number; label: string; red?: boolean };

const Dim: React.FC<DimProps> = ({ x1, x2, y, label, red }) => {
  const mid = (x1 + x2) / 2;
  return (
    <>
      <path d={`M${x1} ${y - 3}v6M${x2} ${y - 3}v6M${x1} ${y}H${mid - 10}M${mid + 10} ${y}H${x2}`} />
      <text x={mid} y={y + 4} textAnchor="middle" fill={red ? "#f00" : "#fff"} stroke="none">
        {label}
      </text>
    </>
  );
};

const B1: React.FC<{ x: number; y1: number; y2: number }> = ({ x, y1, y2 }) => {
  const mid = (y1 + y2) / 2;
  return (
    <>
      <path d={`M${x - 3} ${y1}h6M${x - 3} ${y2}h6M${x} ${y1}V${mid - 7}M${x} ${mid + 7}V${y2}`} />
      <text transform={`translate(${x + 4} ${mid}) rotate(-90)`} textAnchor="middle" fill="#fff" stroke="none">
        b1
      </text>
    </>
  );
};

const Note: React.FC<{ x: number; y: number; children: React.ReactNode }> = ({ x, y, children }) => (
  <text x={x} y={y} fill="#fff" stroke="none">
    {children}
  </text>
);

const Break: React.FC<{ x: number; y: number }> = ({ x, y }) => (
  <path d={`M${x} ${y - 18}v39M${x - 6} ${y - 3}l6-1M${x - 6} ${y - 3}l11 3-5 2`} />
);

type Shape = { lines: [string, number, number][]; bars: string; draw: React.ReactNode };

const shapes: Shape[] = [
  {
    lines: [["一字-1形", 68, 108]],
    bars: "M16 56V50H131V55M16 62v6H131V62",
    draw: (
      <>
        <Dim x1={15.5} x2={56.5} y={37.5} label="Ls1" red />
        <Dim x1={87.5} x2={132.5} y={37.5} label="Ls2" />
        <Break x={6.5} y={58} />
        <Break x={134.5} y={58} />
        <path d="M6.500 45.500h128M6.500 72.500h128M56.500 45v27M87.500 45v27M69.500 50L76 76.500M63.500 68L76 76.500" />
        <B1 x={82} y1={45.5} y2={72.5} />
        <Note x={74} y={87}>1#</Note>
      </>
    ),
  },
  {
    lines: [
      ["预埋件", 71, 106],
      ["一字-2形", 69, 126],
    ],
    bars: "M16 57V52H53V69H16V64M131 56V52H90V69h41V65",
    draw: (
      <>
        <Dim x1={15.5} x2={53.5} y={35.5} label="Ls1" red />
        <Dim x1={89.5} x2={132.5} y={35.5} label="Ls2" />
        <Break x={6.5} y={59} />
        <Break x={134.5} y={59} />
        <path d="M6.500 46.500h47M6.500 74.500h47M89.500 46.500h45M89.500 74.500h45M53.500 41.500h36v36h-36zM34.500 67.500L27.500 78M106 67.500l10 10" />
        <B1 x={82.5} y1={46.5} y2={74.5} />
        <Note x={20} y={87}>1#</Note>
        <Note x={110} y={86}>2#</Note>
      </>
    ),
  },
  {
    lines: [
      ["预留钢筋", 72, 107],
      ["一字-3形", 69, 127],
    ],
    bars: "M16 55V50H132V54M16 62v5H132V63",
    draw: (
      <>
        <Dim x1={16.5} x2={54.5} y={32.5} label="Ls1" red />
        <Dim x1={90.5} x2={132.5} y={32.5} label="Ls2" />
        <Break x={7.5} y={57} />
        <Break x={135.5} y={57} />
        <path d="M7.500 44.500h47M7.500 72.500h47M90.500 44.500h45M90.500 72.500h45M54.500 39.500h36v36h-36zM32.500 47l-2 34M37.500 64.500l-7 17" />
        <B1 x={85.5} y1={44.5} y2={72.5} />
        <Note x={21} y={89}>1#</Note>
      </>
    ),
  },
  {
    lines: [
      ["预留钢筋", 70, 97],
      ["一字-4形", 71, 117],
    ],
    bars: "M112 37H37V55h75",
    draw: (
      <>
        <Dim x1={36.5} x2={98.5} y={20.5} label="Ls1" red />
        <Break x={27.5} y={45} />
        <path d="M27.500 32.500h71M27.500 59.500h71M98.500 27.500h36v36h-36zM76.500 35.500l-2 32M81.500 52l-7 16" />
        <B1 x={16.5} y1={32.5} y2={59.5} />
        <Note x={65} y={77}>1#</Note>
      </>
    ),
  },
  {
    lines: [
      ["植筋", 69, 107],
      ["一字-5形", 69, 130],
    ],
    bars: "M63 50H16V55M16 62v5H63M81 50h51V54M132 64v3H81",
    draw: (
      <>
        <Dim x1={16.5} x2={54.5} y={32.5} label="Ls1" red />
        <Dim x1={90.5} x2={132.5} y={32.5} label="Ls2" />
        <Break x={7.5} y={57} />
        <Break x={135.5} y={57} />
        <path d="M7.500 44.500h47M7.500 72.500h47M90.500 44.500h45M90.500 72.500h45M54.500 39.500h36v36h-36zM32.500 50l-2 30M37.500 63.500l-7 16M112.500 50l2 30M107 63.500l7.500 16" />
        <B1 x={85.5} y1={44.5} y2={72.5} />
        <Note x={21} y={89}>1#</Note>
        <Note x={123} y={89}>2#</Note>
      </>
    ),
  },
  {
    lines: [
      ["植筋", 67, 100],
      ["一字-6形", 71, 120],
    ],
    bars: "M112 40H37V58h75",
    draw: (
      <>
        <Dim x1={36.5} x2={98.5} y={23.5} label="Ls1" red />
        <Break x={27.5} y={48} />
        <path d="M27.500 35.500h71M27.500 62.500h71M98.500 30.500h36v35h-36zM76.500 37.500l-2 34M81.500 55l-7 16" />
        <B1 x={17.5} y1={35.5} y2={62.5} />
        <Note x={65} y={79}>1#</Note>
      </>
    ),
  },
  {
    lines: [
      ["预留钢筋", 72, 108],
      ["一字-7形", 69, 127],
    ],
    bars: "M18 30H15V27H133v3h-3M18 42H15v3H58V64h4M130 42h3v3H85V64h-3",
    draw: (
      <>
        <Dim x1={16.5} x2={54.5} y={10.5} label="Ls1" red />
        <Dim x1={90.5} x2={132.5} y={10.5} label="Ls2" />
        <Break x={7.5} y={35} />
        <Break x={135.5} y={35} />
        <path d="M7.500 22.500h128M7.500 49.500h128M54.500 49.500v36h36v-36M70.500 14l-8 12M37.500 45.500l-6 12M86 55l18 5.500" />
        <B1 x={79.5} y1={22.5} y2={49.5} />
        <Note x={71} y={17}>2#</Note>
        <Note x={23} y={69}>3#</Note>
        <Note x={105} y={65}>1#</Note>
      </>
    ),
  },
];

const cadFont = "font-['Liberation_Serif','Noto_Sans_CJK_SC',serif]";

const Thumb: React.FC<{ shape: Shape }> = ({ shape }) => (
  <svg
    viewBox="0 0 140 140"
    className={`size-[140px] bg-[#008080] ${cadFont}`}
    fill="none"
    stroke="#fff"
    fontSize="12"
    shapeRendering="crispEdges"
  >
    <path d={shape.bars} stroke="#0ff" strokeWidth="2" />
    {shape.draw}
    <g fill="#fff" stroke="none" fontSize="17" textAnchor="middle" className="font-light">
      {shape.lines.map(([text, x, y]) => (
        <text key={text} x={x} y={y}>
          {text}
        </text>
      ))}
    </g>
  </svg>
);

const Preview: React.FC = () => (
  <svg className={`h-[462px] w-[468px] bg-black ${cadFont}`} fill="none">
    <path
      d="M28.500 129v128M28 148.500H442M28 236.500H442M441.500 131v128M190.500 148v88M289.500 148v88M57.500 116v20M190.500 116v20M58 124.500h24M156 124.500h34M289.500 116v20M432.500 118v20M290 124.500h33M397 124.500h35M273.500 148v7M273.500 210v26"
      stroke="#fff"
      shapeRendering="crispEdges"
    />
    <path
      d="M28 171.500L10 177l36 9-18 5.500M441.500 173.500l17 5-34 9 17 6.500M232.500 166l20 85M212.500 222.500l40 28.500"
      stroke="#fff"
    />
    <path
      d="M58 124.500l8-3v6zM190 124.500l-8-3v6zM290 124.500l8-3v6zM432 124.500l-8-3v6zM273.500 148l-3 7h6zM273.500 236l-3-9h6z"
      fill="#fff"
    />
    <path d="M59 184V166H249M289 166H430v14M59 204v18H430V211" stroke="#0ff" strokeWidth="4" />
    <g fontSize="35" textAnchor="middle">
      <text x="120" y="137" fill="#f00">
        1000
      </text>
      <text x="360" y="137" fill="#0f0">
        1000
      </text>
      <text transform="translate(282 182) rotate(-90)" fill="#0f0">
        240
      </text>
      <text x="265" y="281" fill="#fff">
        1#
      </text>
    </g>
    <text x="226" y="349" fontSize="54" fill="#fff" textAnchor="middle" className="font-light">
      一字-1形
    </text>
  </svg>
);

const ShapeDialog: React.FC = () => {
  const [picked, setPicked] = useState(0);

  return (
    <div
      role="dialog"
      aria-label="选择参数化图形"
      className="absolute inset-x-0 top-[236px] mx-auto w-[958px] border border-[#bfc1c4] bg-white px-[11px] shadow-[0_2px_14px_rgba(0,0,0,0.45)]"
    >
      <div className="flex h-[34px] items-center justify-between pt-1 pr-px text-sm">
        选择参数化图形
        <WinButtons />
      </div>
      <div className="flex h-[37px] items-center pb-0.5">
        <div className="flex w-[466px] items-center">
          <span className="w-[102px]">参数化截面类型：</span>
          <Select label="参数化截面类型" options={["一字形"]} className="h-[26px] w-[90px]" />
        </div>
        <span>单位：&nbsp; mm</span>
      </div>
      <div className="flex gap-1.5">
        <div className="grid h-[462px] w-[460px] grid-cols-[repeat(3,153px)] content-start border border-[#c3c3c3]">
          {shapes.map((s, i) => (
            <button
              key={i}
              aria-label={s.lines[s.lines.length - 1][0]}
              onClick={() => setPicked(i)}
              className="h-[153px] w-[153px] border-r border-b border-[#d3d3d3]"
            >
              <span
                className={`flex h-[152px] w-[152px] items-center justify-center ${
                  picked === i ? "border-2 border-[#0c8fff] bg-[#9cc6fb]" : ""
                }`}
              >
                <Thumb shape={s} />
              </span>
            </button>
          ))}
        </div>
        <Preview />
      </div>
      <div className="flex justify-end gap-1.5 pt-1.5">
        <button className="h-[26px] w-20 rounded bg-[#2b7de1] text-white">确定</button>
        <button className="h-[26px] w-20 rounded border border-[#c3c3c3] bg-white">取消</button>
      </div>
      <div className="-mr-2 flex justify-end pb-[3px]">
        <Grip />
      </div>
    </div>
  );
};

const App: React.FC = () => (
  <div className="relative flex h-screen w-full flex-col overflow-hidden bg-white font-['Noto_Sans','Noto_Sans_CJK_SC',sans-serif] text-xs leading-4 text-[#333]">
    <TopBar />
    <Ribbon />
    <div className="flex h-[27px] shrink-0 items-center gap-[3px] border-t border-[#d5d5d5] bg-[#f0f0f0] pl-0.5">
      <Select label="当前楼层" options={["首层"]} className="h-[23px] w-[100px]" />
      <Select label="构件类型" options={["墙"]} className="h-[23px] w-[100px]" />
    </div>
    <div className="flex min-h-0 flex-1">
      <div className="flex w-[210px] shrink-0 flex-col border border-[#d5d5d5]">
        <div className="h-[11px] border-b border-[#d5d5d5] bg-[#e8e8e8]" />
        <div className="flex h-[22px] items-center border-b border-[#d5d5d5] bg-[#f0f0f0] pl-2 text-[#7d7d7d]">导航栏</div>
        <div className="flex h-7 items-center justify-between border-b border-[#d5d5d5] pl-[7px]">
          <Icon name="plus2" className="size-3" />
          <button aria-label="列表" className="mr-5 flex h-[22px] w-8 items-center rounded-sm bg-[#c3dbf5] pl-1">
            <Icon name="bullets" />
          </button>
        </div>
        <div className="pt-[3px]">
          <NavTree initial={["墙", "门窗洞"]} />
        </div>
      </div>
      <div className="ml-1 flex w-[284px] shrink-0 flex-col bg-white pr-1">
        <div className="flex-1 border border-t-0 border-[#d5d5d5]">
          <div className="h-full w-[22px] bg-[#efefef]" />
        </div>
        <div className="pt-[5px] pb-[3px] pl-1.5">
          <button className="h-6 w-20 rounded border border-[#c3c3c3]">参数图</button>
        </div>
      </div>
      <Workspace />
    </div>
    <StatusBar />
    <div className="h-2 shrink-0 bg-[#1a2a31]">
      <div className="ml-[221px] h-full w-9 bg-[#4a575d]" />
    </div>
    <DefineWindow />
    <ShapeDialog />
  </div>
);

export default App;
